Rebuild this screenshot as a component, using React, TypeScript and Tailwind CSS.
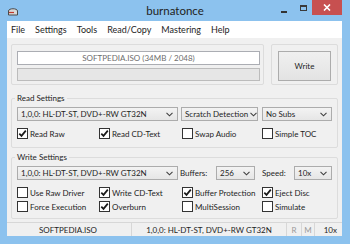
import React from 'react';

function Chevron() {
  return (
    <svg width="7" height="5" viewBox="0 0 7 5" className="shrink-0">
      <polyline points="0.5,0.8 3.5,3.8 6.5,0.8" fill="none" stroke="#404040" strokeWidth="1.1" />
    </svg>
  );
}

function Combo({ text, className }: { text: string; className: string }) {
  return (
    <div
      className={`h-[14px] flex items-center justify-between gap-[2px] pl-[3px] pr-[4px] border border-[#acacac] bg-gradient-to-b from-[#f3f3f3] to-[#e6e6e6] ${className}`}
    >
      <span className="whitespace-nowrap leading-none">{text}</span>
      <Chevron />
    </div>
  );
}

function Check({ label, checked, className }: { label: string; checked?: boolean; className?: string }) {
  return (
    <div className={`flex items-center gap-[2px] h-[11px] ${className ?? ''}`}>
      <div className="w-[11px] h-[11px] border border-[#333] bg-white flex items-center justify-center shrink-0">
        {checked && (
          <svg width="9" height="9" viewBox="0 0 9 9">
            <polyline points="1.3,4.6 3.5,6.9 7.8,1.6" fill="none" stroke="#1a1a1a" strokeWidth="1.7" />
          </svg>
        )}
      </div>
      <span className="leading-none whitespace-nowrap">{label}</span>
    </div>
  );
}

export default function App() {
  const menu = ['File', 'Settings', 'Tools', 'Read/Copy', 'Mastering', 'Help'];

  return (
    <div className="w-[350px] h-[244px] bg-[#8cc2ee] flex flex-col overflow-hidden font-['Lato',sans-serif] text-[8px] text-[#1e1e1e]">
      {/* Title bar */}
      <div className="h-[21px] grid grid-cols-[1fr_auto_1fr] shrink-0">
        <div className="pl-[7px] pt-[7px]">
          <svg width="12" height="9" viewBox="0 0 12 9">
            <path d="M1.5 4 C1.5 1 10.5 1 10.5 4 L10.5 8 L1.5 8 Z" fill="#d8d8d8" stroke="#4a4a4a" strokeWidth="1" />
            <line x1="2" y1="5.5" x2="7" y2="5.5" stroke="#c0392b" strokeWidth="1.2" />
          </svg>
        </div>
        <div className="text-[11.5px] leading-[21px] text-[#222]">burnatonce</div>
        <div className="flex justify-end items-start pr-[8px]">
          <div className="w-[6px] h-[2px] bg-[#333] mt-[11px]" />
          <div className="w-[7px] h-[6px] border border-t-2 border-[#3a3a3a] mt-[5px] ml-[13px]" />
          <div className="w-[30px] h-[15px] bg-[#c75050] ml-[5px] flex items-center justify-center">
            <svg width="8" height="7" viewBox="0 0 8 7">
              <path d="M1 0.5 L7 6.5 M7 0.5 L1 6.5" stroke="#fff" strokeWidth="1.6" />
            </svg>
          </div>
        </div>
      </div>

      <div className="flex-1 flex flex-col pl-[7px] pr-[8px] pb-[8px]">
        {/* Menu */}
        <div className="h-[17px] bg-white flex items-center gap-[10px] pl-[4px] text-[9px] shrink-0">
          {menu.map((m) => (
            <span key={m} className="leading-none">{m}</span>
          ))}
        </div>

        {/* Client */}
        <div className="flex-1 bg-[#f0f0f0] flex flex-col px-[4px]">
          <div className="mt-[6px] flex gap-[7px] h-[41px]">
            <div className="w-[253px] border border-[#dcdcdc] rounded-[2px] pl-[5px] pr-[3px] pt-[6px] flex flex-col gap-[3px]">
              <div className="h-[14px] bg-white border border-[#abadb3] flex items-center justify-center text-[#6d6d6d] leading-none">
                SOFTPEDIA.ISO (34MB / 2048)
              </div>
              <div className="h-[13px] bg-[#e6e6e6] border border-[#bcbcbc]" />
            </div>
            <div className="flex-1 border border-[#dcdcdc] rounded-[2px] pl-[6px] pt-[6px]">
              <div className="w-[53px] h-[30px] border border-[#acacac] bg-gradient-to-b from-[#f0f0f0] to-[#e3e3e3] flex items-center justify-center leading-none">
                Write
              </div>
            </div>
          </div>

          {/* Read Settings */}
          <fieldset className="mt-[7px] border border-[#dcdcdc] rounded-[2px] pl-[5px] pr-[5px] pb-[8px]">
            <legend className="-ml-[2px] px-[2px] leading-[12px]">Read Settings</legend>
            <div className="mt-[3px] flex flex-col gap-[7px]">
              <div className="flex">
                <Combo text="1,0,0: HL-DT-ST, DVD+-RW GT32N" className="w-[161px]" />
                <Combo text="Scratch Detection" className="w-[77px] ml-[3px]" />
                <Combo text="No Subs" className="w-[70px] ml-[4px]" />
              </div>
              <div className="flex">
                <Check label="Read Raw" checked className="w-[82px]" />
                <Check label="Read CD-Text" checked className="w-[83px]" />
                <Check label="Swap Audio" className="w-[80px]" />
                <Check label="Simple TOC" />
              </div>
            </div>
          </fieldset>

          {/* Write Settings */}
          <fieldset className="mt-[3px] border border-[#dcdcdc] rounded-[2px] pl-[5px] pr-[5px] pb-[6px]">
            <legend className="-ml-[2px] px-[2px] leading-[12px]">Write Settings</legend>
            <div className="mt-[3px] flex flex-col">
              <div className="flex items-center">
                <Combo text="1,0,0: HL-DT-ST, DVD+-RW GT32N" className="w-[161px]" />
                <span className="w-[36px] ml-[2px] leading-none">Buffers:</span>
                <Combo text="256" className="w-[39px]" />
                <span className="w-[32px] ml-[7px] leading-none">Speed:</span>
                <Combo text="10x" className="w-[38px]" />
              </div>
              <div className="flex mt-[7px]">
                <Check label="Use Raw Driver" className="w-[82px]" />
                <Check label="Write CD-Text" checked className="w-[83px]" />
                <Check label="Buffer Protection" checked className="w-[80px]" />
                <Check label="Eject Disc" checked />
              </div>
              <div className="flex mt-[3px]">
                <Check label="Force Execution" className="w-[82px]" />
                <Check label="Overburn" checked className="w-[83px]" />
                <Check label="MultiSession" className="w-[80px]" />
                <Check label="Simulate" />
              </div>
            </div>
          </fieldset>
        </div>

        {/* Status bar */}
        <div className="h-[14px] bg-[#f0f0f0] border-t border-[#d7d7d7] flex items-center leading-none shrink-0">
          <div className="w-[124px] pl-[32px]">SOFTPEDIA.ISO</div>
          <div className="w-[155px] h-full border-l border-[#d7d7d7] flex items-center justify-center">
            1,0,0: HL-DT-ST, DVD+-RW GT32N
          </div>
          <div className="w-[15px] h-full border-l border-[#d7d7d7] flex items-center justify-center text-[#9a9a9a]">R</div>
          <div className="w-[13px] h-full border-l border-[#d7d7d7] flex items-center justify-center text-[#9a9a9a]">M</div>
          <div className="flex-1 h-full border-l border-[#d7d7d7] flex items-center justify-end pr-[5px]">10x</div>
        </div>
      </div>
    </div>
  );
}
